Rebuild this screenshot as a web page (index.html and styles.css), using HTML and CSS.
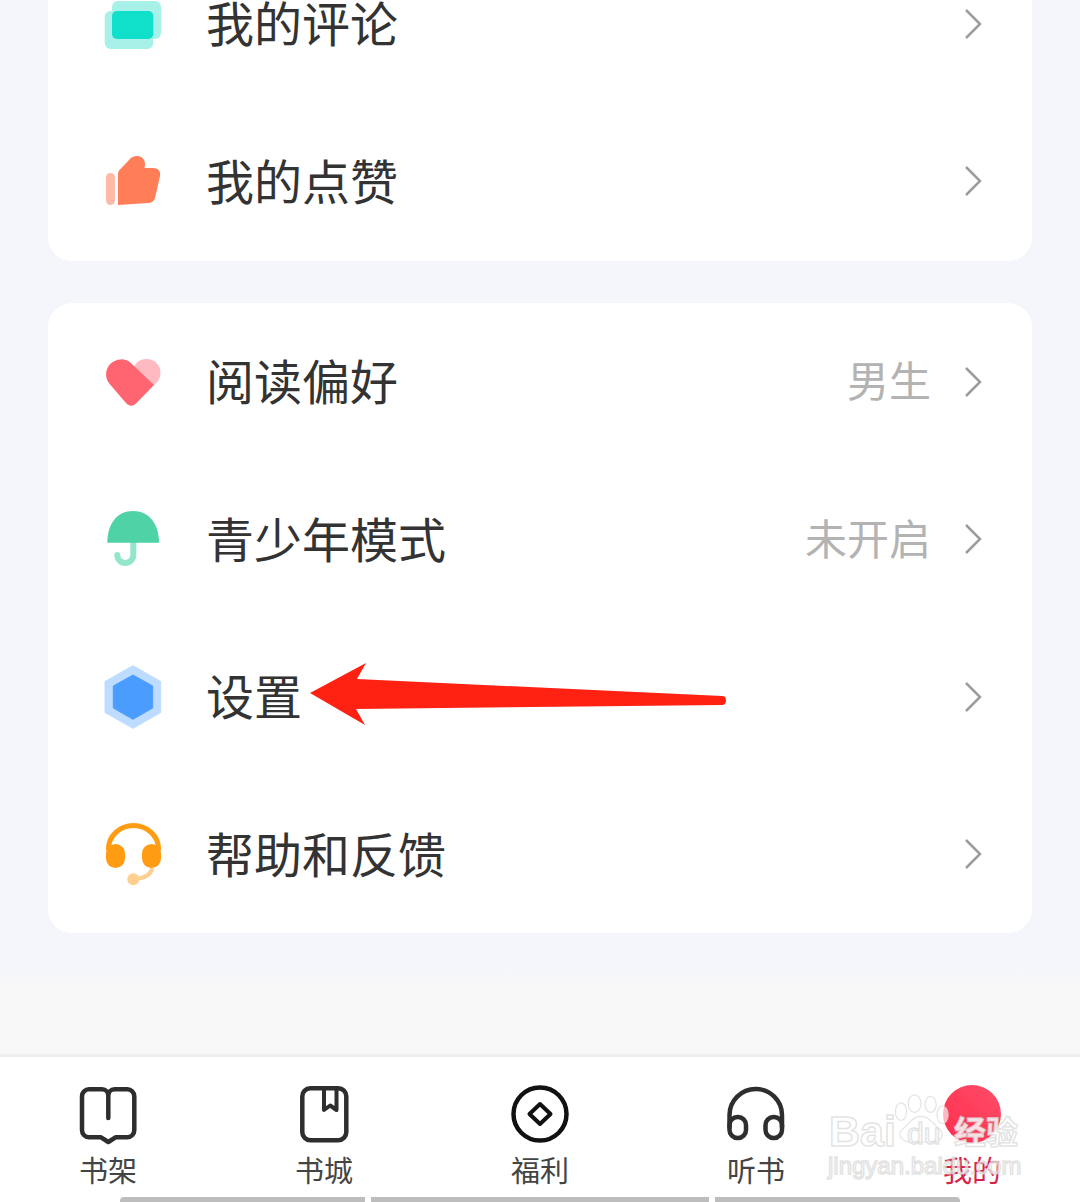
FILE: index.html
```html
<!DOCTYPE html>
<html>
	<head>
		<meta charset="utf-8"/>
		<title>我的</title>
		<link rel="stylesheet" href="styles.css">
	</head>
	<body>
		<div class="page">
			<div class="content">
				<div class="card">
					<div class="row">
						<svg class="icon" viewBox="0 0 60 60">
							<rect x="2.7" y="17" width="48.6" height="38" rx="6" fill="#a8f1e8"/>
							<rect x="10" y="7" width="49" height="38" rx="6" fill="#a8f1e8"/>
							<rect x="10" y="17" width="41.3" height="28" rx="5" fill="#10e0c9"/>
						</svg>
						<span class="name">我的评论</span>
						<svg class="chevron" viewBox="0 0 18 32"><path d="M2 2l14 14L2 30"/></svg>
					</div>
					<div class="row">
						<svg class="icon" viewBox="0 0 60 60">
							<rect x="4" y="22" width="9" height="32" rx="4.5" fill="#ffb9a8"/>
							<path d="M16 54V23c0-2 1-3.500 2-4.500L27 9c2-3 5-4 8-4 5 0 8.500 4 8 9l-.5 3H51c5 0 8 3.500 7 8l-5 22c-1 3.500-3.500 5-7 5z" fill="#ff7e57"/>
						</svg>
						<span class="name">我的点赞</span>
						<svg class="chevron" viewBox="0 0 18 32"><path d="M2 2l14 14L2 30"/></svg>
					</div>
				</div>

				<div class="card">
					<div class="row">
						<svg class="icon" viewBox="0 0 60 60">
							<circle cx="44.500" cy="21" r="14" fill="#ffb9c1"/>
							<path d="M29.300 11.400L52 33 34.500 51c-3.500 3.500-7 3.500-10.500 0L8.100 32.600A15 15 0 0 1 29.300 11.400z" fill="#ff6471"/>
						</svg>
						<span class="name">阅读偏好</span>
						<span class="value">男生</span>
						<svg class="chevron" viewBox="0 0 18 32"><path d="M2 2l14 14L2 30"/></svg>
					</div>
					<div class="row">
						<svg class="icon" viewBox="0 0 60 60">
							<path d="M31.300 33.700V46a8 8 0 0 1-16 0" fill="none" stroke="#93e6ca" stroke-width="6" stroke-linecap="round"/>
							<path d="M5.300 33.700C5.300 15 15 2 31 2s26 13 26 31.700z" fill="#4fd2a5"/>
						</svg>
						<span class="name">青少年模式</span>
						<span class="value">未开启</span>
						<svg class="chevron" viewBox="0 0 18 32"><path d="M2 2l14 14L2 30"/></svg>
					</div>
					<div class="row">
						<svg class="icon" viewBox="0 0 60 60">
							<path d="M31-1.300L58.700 14.500V45.500L31 61.300 3 45.500V14.500z" fill="#bddcff" stroke="#bddcff" stroke-linejoin="round"/>
							<path d="M31 8L50.700 19V41L31 52.300 11.300 41V19z" fill="#4a9dff" stroke="#4a9dff" stroke-linejoin="round"/>
						</svg>
						<span class="name">设置</span>
						<svg class="chevron" viewBox="0 0 18 32"><path d="M2 2l14 14L2 30"/></svg>
					</div>
					<div class="row">
						<svg class="icon" viewBox="0 0 60 60">
							<path d="M33 55Q48 54 50.300 44" fill="none" stroke="#ffcf90" stroke-width="4"/>
							<circle cx="31.300" cy="55.300" r="6" fill="#ffcf90"/>
							<path d="M6.500 26V25A25 23.500 0 0 1 56.500 25V26" fill="none" stroke="#ff9c12" stroke-width="5"/>
							<rect x="4" y="20" width="19" height="24" rx="9.500" fill="#ff9c12"/>
							<rect x="40" y="20" width="19" height="24" rx="9.500" fill="#ff9c12"/>
						</svg>
						<span class="name">帮助和反馈</span>
						<svg class="chevron" viewBox="0 0 18 32"><path d="M2 2l14 14L2 30"/></svg>
					</div>
				</div>
				<div class="fade"></div>
			</div>

			<div class="tabbar">
				<div class="tabs">
					<div class="tab">
						<svg class="tab-icon" viewBox="0 0 60 60">
							<path d="M30.300 33V11C30.300 7 28 4.300 24 4.300H11a7 7 0 0 0-7 7V45.300a7 7 0 0 0 7 7H23L30.300 57 37.500 52.300H49.300a7 7 0 0 0 7-7V11.300a7 7 0 0 0-7-7H36.600C32.600 4.300 30.300 7 30.300 11"/>
						</svg>
						<span>书架</span>
					</div>
					<div class="tab">
						<svg class="tab-icon" viewBox="0 0 60 60">
							<rect x="8.300" y="3.300" width="44" height="52" rx="8"/>
							<path d="M30 3.500V25L36.200 20.500 42.500 25V3.500" stroke-width="4"/>
						</svg>
						<span>书城</span>
					</div>
					<div class="tab">
						<svg class="tab-icon coin" viewBox="0 0 60 60">
							<circle cx="30" cy="29" r="26.500"/>
							<path d="M30 19L40.500 29 30 39 19.500 29z" stroke-width="4"/>
						</svg>
						<span>福利</span>
					</div>
					<div class="tab">
						<svg class="tab-icon" viewBox="0 0 60 60">
							<path d="M3.500 42V30A26.250 26 0 0 1 56 30V42"/>
							<rect x="3.500" y="32" width="16.500" height="21" rx="8"/>
							<rect x="39.500" y="32" width="16.500" height="21" rx="8"/>
						</svg>
						<span>听书</span>
					</div>
					<div class="tab tab-active">
						<div class="avatar"></div>
						<span>我的</span>
					</div>
				</div>
				<div class="nav-bars">
					<div class="nav-bar nav-left"></div>
					<div class="nav-bar nav-middle"></div>
					<div class="nav-bar nav-right"></div>
				</div>
			</div>

			<svg class="arrow" viewBox="0 0 430 70">
				<path d="M4 33L60 3 51 19 416 36Q420 36 420 40 420 45 416 45L50 49 59 65z" fill="#ff2213"/>
			</svg>

			<div class="watermark">
				<svg class="paw" viewBox="0 0 70 60">
					<ellipse cx="10" cy="22" rx="7" ry="11"/>
					<ellipse cx="27" cy="12" rx="8" ry="11"/>
					<ellipse cx="47" cy="13" rx="7" ry="10"/>
					<ellipse cx="62" cy="26" rx="7" ry="11"/>
					<path d="M35 28C24 28 20 38 12 44 4 52 12 60 22 60H50C60 60 66 50 58 44 50 38 46 28 35 28z"/>
				</svg>
				<span class="wm-bai">Bai</span>
				<span class="wm-du">du</span>
				<span class="wm-cn">经验</span>
				<span class="wm-url">jingyan.baidu.com</span>
			</div>
		</div>
	</body>
</html>
```

FILE: styles.css
```css
body {
	font-family: "Noto Sans CJK SC", "Noto Sans", sans-serif;
	margin: 0;
	background: #f4f6fb;
	color: #333;
}
.page {
	position: relative;
	height: 1202px;
	overflow: hidden;
	display: flex;
	flex-direction: column;
}
.content {
	flex: 1;
	margin-top: -55px;
	display: flex;
	flex-direction: column;
	gap: 42px;
	padding: 0 48px;
}
.card {
	background: #fff;
	border-radius: 24px;
}
.card:first-child {
	padding-bottom: 1px;
}
.row {
	height: 157.500px;
	display: flex;
	align-items: center;
	padding: 0 50px 0 54px;
}
.icon {
	width: 60px;
	height: 60px;
	overflow: visible;
	flex: none;
}
.name {
	margin-left: 44px;
	padding-bottom: 5px;
	font-size: 48px;
	line-height: 44px;
	flex: 1;
}
.value {
	font-size: 42px;
	line-height: 44px;
	padding-bottom: 5px;
	color: #b3b3b3;
	margin-right: 33px;
}
.chevron {
	width: 18px;
	height: 32px;
	flex: none;
	fill: none;
	stroke: #9c9c9c;
	stroke-width: 2.500;
}
.fade {
	flex: 1;
	margin: -42px -48px 0;
	background: linear-gradient(#f4f6fb 32px, #f8f8f8 52px);
}
.tabbar {
	height: 148px;
	flex: none;
	box-sizing: border-box;
	border-top: 3px solid #eee;
	background: #fff;
	display: flex;
	flex-direction: column;
}
.tabs {
	flex: 1;
	display: grid;
	grid-template-columns: repeat(5, 1fr);
	padding-top: 28px;
}
.tab {
	display: flex;
	flex-direction: column;
	align-items: center;
	font-size: 29px;
	line-height: 30px;
	color: #444;
}
.tab-icon {
	width: 60px;
	height: 60px;
	fill: none;
	stroke: #2e2e2e;
	stroke-width: 4.500;
	stroke-linejoin: round;
	stroke-linecap: round;
	margin-bottom: 9px;
}
.coin {
	stroke: #111;
}
.avatar {
	width: 58px;
	height: 58px;
	margin-bottom: 11px;
	border-radius: 50%;
	background: linear-gradient(45deg, #ff2e4c, #ff4d6a);
}
.tab-active {
	color: #d8224a;
}
.nav-bars {
	height: 5px;
	display: flex;
	justify-content: center;
	gap: 6px;
}
.nav-bar {
	background: #bdbdbd;
}
.nav-left {
	width: 245px;
	border-top-left-radius: 4px;
}
.nav-middle {
	width: 338px;
}
.nav-right {
	width: 245px;
	border-top-right-radius: 4px;
}
/* red annotation over the settings row */
.arrow {
	position: absolute;
	left: 306px;
	top: 660px;
	width: 430px;
	height: 70px;
}
.watermark {
	position: absolute;
	left: 826px;
	top: 1085px;
	width: 200px;
	height: 100px;
}
.watermark span {
	position: absolute;
	font-family: "Liberation Sans", sans-serif;
	color: rgba(255, 255, 255, .6);
	-webkit-text-stroke: 1.500px rgba(215, 215, 215, .7);
}
.paw {
	position: absolute;
	left: 67px;
	top: 3px;
	width: 56px;
	height: 60px;
	fill: rgba(255, 255, 255, .65);
	stroke: rgba(215, 215, 215, .7);
	stroke-width: 1.500;
}
.wm-bai {
	left: 3px;
	top: 21px;
	font-size: 43px;
	font-weight: bold;
	line-height: 50px;
}
.wm-du {
	left: 81px;
	top: 31px;
	font-size: 30px;
	line-height: 36px;
}
.watermark .wm-cn {
	left: 128px;
	top: 22px;
	font-size: 32px;
	font-weight: bold;
	line-height: 46px;
	font-family: "Noto Sans CJK SC", sans-serif;
	color: rgba(255, 255, 255, .85);
}
.wm-url {
	left: 2px;
	top: 67px;
	font-size: 24px;
	line-height: 28px;
	white-space: nowrap;
}
```
